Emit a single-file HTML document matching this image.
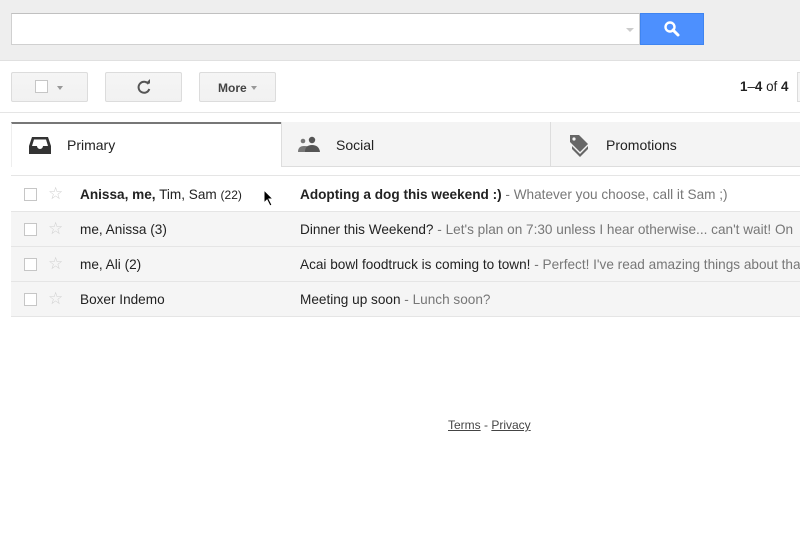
<!DOCTYPE html>
<html><head><style>
*{margin:0;padding:0;box-sizing:border-box}
body{width:800px;height:534px;overflow:hidden;background:#fff;font-family:"Liberation Sans",Arial,sans-serif;font-size:13px;color:#222;position:relative}
.abs{position:absolute}
.btn{position:absolute;top:72px;height:30px;border:1px solid #dcdcdc;border-radius:2px;background:linear-gradient(#f5f5f5,#f1f1f1)}
.row{position:absolute;left:11px;width:789px;height:35px;border-bottom:1px solid #e5e5e5;background:#f5f5f5;font-size:13.6px}
.cb{position:absolute;left:13px;top:11px;width:13px;height:13px;border:1px solid #c6c6c6;background:#fff}
.star{position:absolute;left:37px;top:7px;color:#d0d0d0;font-size:17px}
.from{position:absolute;left:69px;top:10px}
.subj{position:absolute;left:289px;top:10px;white-space:nowrap}
.g{color:#777}
.tab{position:absolute;top:122px;height:45px;background:#f4f4f4;border-left:1px solid #ddd;border-bottom:1px solid #ddd}
.tab span{position:absolute;top:15px;font-size:14px}
</style></head><body>
<div class="abs" style="left:0;top:0;width:800px;height:61px;background:#eeeeee;border-bottom:1px solid #e0e0e0"></div>
<div class="abs" style="left:11px;top:13px;width:629px;height:32px;background:#fff;border:1px solid #d0d0d0;border-top-color:#c0c0c0"></div>
<div class="abs" style="left:626px;top:28px;border:4px solid transparent;border-top-color:#ccc;border-bottom:0"></div>
<div class="abs" style="left:640px;top:13px;width:64px;height:32px;background:#4d90fe;border:1px solid #3f84f0"></div>
<svg class="abs" style="left:663px;top:20px" width="18" height="18" viewBox="0 0 18 18"><circle cx="7" cy="7" r="4.5" fill="none" stroke="#fff" stroke-width="2.4"/><path d="M10 10l5 5" stroke="#fff" stroke-width="3" stroke-linecap="round"/></svg>
<div class="btn" style="left:11px;width:77px"><div class="abs" style="left:23px;top:7px;width:13px;height:13px;border:1px solid #c6c6c6;background:#fff"></div><div class="abs" style="left:45px;top:13px;border:3px solid transparent;border-top:4px solid #999;border-bottom:0"></div></div>
<div class="btn" style="left:105px;width:77px"><svg class="abs" style="left:30px;top:6px" width="16" height="16" viewBox="0 0 16 16"><path d="M12.5 5A5.5 5.5 0 1 0 13.3 10" fill="none" stroke="#555" stroke-width="2"/><path d="M9.5 4.5h4.5v-4.5z" fill="#555"/></svg></div>
<div class="btn" style="left:199px;width:77px"><span class="abs" style="left:18px;top:8px;font-size:12px;font-weight:bold;color:#444">More</span><div class="abs" style="left:51px;top:13px;border:3px solid transparent;border-top:4px solid #999;border-bottom:0"></div></div>
<div class="abs" style="left:740px;top:79px;font-size:13.4px"><span style="font-weight:bold">1</span>–<b>4</b> of <b>4</b></div>
<div class="abs" style="left:797px;top:72px;width:10px;height:30px;border:1px solid #dcdcdc;background:#f5f5f5"></div>
<div class="abs" style="left:0;top:112px;width:800px;height:1px;background:#e5e5e5"></div>
<div class="tab" style="left:11px;width:270px;background:#fff;border-top:2px solid #777;border-bottom:none;border-left:1px solid #eee"></div>
<svg class="abs" style="left:29px;top:136px" width="22" height="18" viewBox="0 0 22 18"><path d="M3 1h16l3 9v8H0v-8z" fill="#333"/><path d="M5 3.5h12l2 6.5h-5a3 3 0 0 1-6 0H3z" fill="#fff"/></svg>
<span class="abs" style="left:67px;top:137px;font-size:14px">Primary</span>
<div class="tab" style="left:281px;width:269px"><svg class="abs" style="left:16px;top:14px" width="24" height="18" viewBox="0 0 24 18"><circle cx="5" cy="5" r="2.3" fill="#777"/><circle cx="14" cy="4" r="3.2" fill="#555"/><path d="M0 16q0-6 6-6t4 2v4z" fill="#777"/><path d="M7 16q0-7 7-7t8 7z" fill="#555"/></svg><span style="left:54px">Social</span></div>
<div class="tab" style="left:550px;width:250px"><svg class="abs" style="left:17px;top:12px" width="22" height="24" viewBox="0 0 22 24"><path d="M2 1h9l9 9-8 8-10-10z" fill="#666"/><circle cx="6" cy="5" r="1.6" fill="#f4f4f4"/><path d="M4 12l8 8 8-8v3l-8 8-8-8z" fill="#666"/></svg><span style="left:55px">Promotions</span></div>
<div class="abs" style="left:11px;top:175px;width:789px;height:1px;background:#e5e5e5"></div>
<div class="row" style="top:177px;background:#fff"><div class="cb"></div><div class="star">☆</div><div class="from"><b>Anissa, me,</b> Tim, Sam <span style="font-size:12px">(22)</span></div><div class="subj"><b>Adopting a dog this weekend :)</b> <span class="g">- Whatever you choose, call it Sam ;)</span></div></div>
<svg class="abs" style="left:263px;top:189px" width="12" height="18" viewBox="0 0 12 18"><path d="M1 1v13l3-3 3 6 2-1-3-6h4z" fill="#000" stroke="#fff" stroke-width="1"/></svg>
<div class="row" style="top:212px"><div class="cb"></div><div class="star">☆</div><div class="from">me, Anissa (3)</div><div class="subj">Dinner this Weekend? <span class="g">- Let's plan on 7:30 unless I hear otherwise... can't wait! On</span></div></div>
<div class="row" style="top:247px"><div class="cb"></div><div class="star">☆</div><div class="from">me, Ali (2)</div><div class="subj">Acai bowl foodtruck is coming to town! <span class="g">- Perfect! I've read amazing things about tha</span></div></div>
<div class="row" style="top:282px"><div class="cb"></div><div class="star">☆</div><div class="from">Boxer Indemo</div><div class="subj">Meeting up soon <span class="g">- Lunch soon?</span></div></div>
<div class="abs" style="left:448px;top:418px;font-size:12px;color:#444"><u>Terms</u> - <u>Privacy</u></div>
</body></html>
